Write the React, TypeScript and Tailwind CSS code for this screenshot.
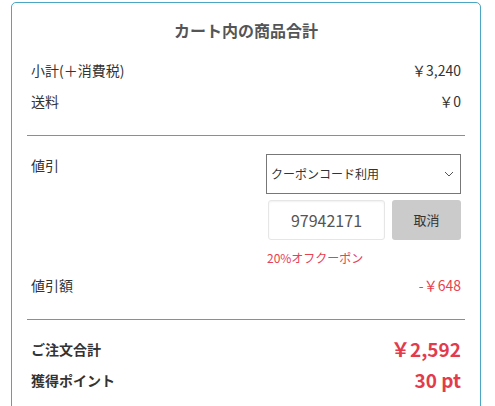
export default function App() {
  return (
    <div className="min-h-screen bg-white font-['Noto_Sans_CJK_JP','Noto_Sans',sans-serif] text-[#333]">
      <div className="ml-[11px] mt-[2px] w-[470px] rounded-[5px] border border-[#4aa6c3] px-[15px] pb-6">
        <h2 className="pt-[13px] text-center text-[16px] font-bold leading-[28px] text-[#555]">
          カート内の商品合計
        </h2>
        <div className="mt-[11px] px-[4px] text-[14px]">
          <div className="flex h-[31px] items-center justify-between">
            <span>小計(＋消費税)</span>
            <span>￥3,240</span>
          </div>
          <div className="flex h-[31px] items-center justify-between">
            <span>送料</span>
            <span>￥0</span>
          </div>
        </div>
        <div className="mt-[18px] h-px bg-[#4aa6c3]" />

        <div className="mt-[18px] flex justify-between px-[4px] text-[14px]">
          <span className="leading-[22px]">値引</span>
          <div className="w-[195px]">
            <div className="flex h-[40px] items-center justify-between border border-[#777] pl-[4px] pr-[6px] text-[12px]">
              <span>クーポンコード利用</span>
              <svg width="10" height="6" viewBox="0 0 10 6" fill="none" stroke="#555" strokeWidth="1">
                <path d="M1 1l4 4 4-4" />
              </svg>
            </div>
            <div className="mt-[6px] flex gap-[7px] pl-[2px]">
              <div className="flex h-[40px] w-[117px] items-center justify-center rounded-[3px] border border-[#e6e6e6] text-[16px] text-[#555] shadow-[inset_0_1px_2px_rgba(0,0,0,0.06)]">
                97942171
              </div>
              <button className="h-[40px] flex-1 rounded-[3px] bg-[#cbcbcb] text-[13px] text-[#333]">
                取消
              </button>
            </div>
            <div className="mt-[9px] pl-[1px] text-[12px] leading-[18px] text-[#e8414f]">20%オフクーポン</div>
          </div>
        </div>

        <div className="mt-[3px] flex h-[31px] items-center justify-between px-[4px] text-[14px]">
          <span>値引額</span>
          <span className="text-[#e8414f]">-￥648</span>
        </div>
        <div className="mt-[18px] h-px bg-[#4aa6c3]" />

        <div className="mt-[14px] px-[4px]">
          <div className="flex h-[31px] items-center justify-between">
            <span className="text-[14px] font-bold">ご注文合計</span>
            <span className="text-[19px] font-bold text-[#e23c4c]">￥2,592</span>
          </div>
          <div className="flex h-[31px] items-center justify-between">
            <span className="text-[14px] font-bold">獲得ポイント</span>
            <span className="text-[19px] font-bold text-[#e23c4c]">30 pt</span>
          </div>
        </div>
      </div>
    </div>
  );
}
